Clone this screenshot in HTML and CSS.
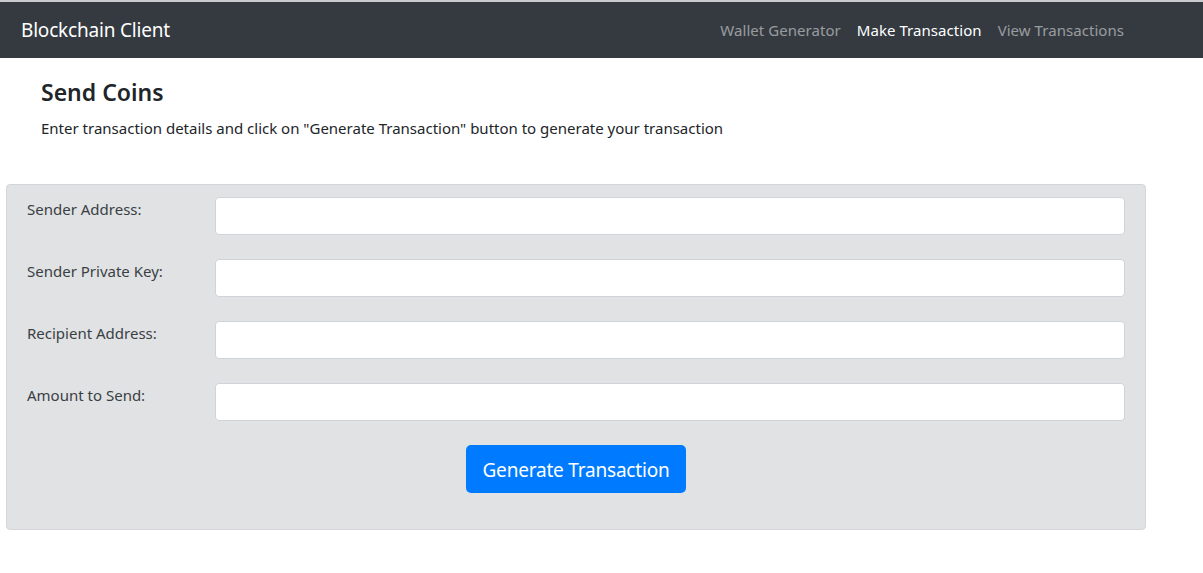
FILE: index.html
```html
<!DOCTYPE html>
<html>
<head>
<meta charset="utf-8">
<title>Blockchain Client</title>
<link rel="stylesheet" href="styles.css">
</head>
<body>
<nav class="navbar">
  <a class="brand" href="#">Blockchain Client</a>
  <ul class="nav">
    <li><a class="nav-link" href="#">Wallet Generator</a></li>
    <li><a class="nav-link active" href="#">Make Transaction</a></li>
    <li><a class="nav-link" href="#">View Transactions</a></li>
  </ul>
</nav>
<main class="intro">
  <h4 class="title">Send Coins</h4>
  <p class="lead-text">Enter transaction details and click on "Generate Transaction" button to generate your transaction</p>
</main>
<section class="card">
  <div class="form-row">
    <label class="form-label">Sender Address:</label>
    <input class="form-input" type="text">
  </div>
  <div class="form-row">
    <label class="form-label">Sender Private Key:</label>
    <input class="form-input" type="text">
  </div>
  <div class="form-row">
    <label class="form-label">Recipient Address:</label>
    <input class="form-input" type="text">
  </div>
  <div class="form-row">
    <label class="form-label">Amount to Send:</label>
    <input class="form-input" type="text">
  </div>
  <div class="actions">
    <button class="btn" type="button">Generate Transaction</button>
  </div>
</section>
</body>
</html>
```
FILE: styles.css
```css
* { box-sizing: border-box; }
html, body { margin: 0; padding: 0; background: #fff; }
body {
  font-family: "Noto Sans", "Open Sans", sans-serif;
  font-size: 15px;
  color: #212529;
  border-top: 2px solid #c8cacd;
}
.navbar {
  height: 56px;
  background: #343a40;
  display: flex;
  align-items: center;
  justify-content: space-between;
  padding: 0 79px 0 21px;
}
.brand {
  color: #fff;
  text-decoration: none;
  font-size: 19px;
  letter-spacing: -0.2px;
}
.nav {
  list-style: none;
  display: flex;
  margin: 0;
  padding: 0;
  gap: 16px;
}
.nav-link {
  color: rgba(255,255,255,0.5);
  text-decoration: none;
  font-size: 15px;
  letter-spacing: 0.05px;
}
.nav-link.active { color: #fff; }
.intro {
  padding: 19px 41px 0;
}
.title {
  margin: 0;
  font-size: 23px;
  font-weight: 600;
  line-height: 30px;
  letter-spacing: 0;
}
.lead-text {
  margin: 10px 0 0;
  font-size: 15px;
  line-height: 22px;
  letter-spacing: 0;
}
.card {
  margin: 45px 0 0 6px;
  width: 1140px;
  background: #e1e2e4;
  border: 1px solid #d3d5d8;
  border-radius: 4px;
  padding: 12px 20px 36px 20px;
  display: flex;
  flex-direction: column;
  gap: 24px;
}
.form-row {
  display: flex;
  align-items: flex-start;
}
.form-label {
  width: 188px;
  font-size: 15px;
  line-height: 22px;
  color: #3a3f44;
  padding-top: 1px;
  letter-spacing: 0;
}
.form-input {
  flex: 1;
  height: 38px;
  border: 1px solid #ced4da;
  border-radius: 4px;
  background: #fff;
}
.actions {
  display: flex;
  justify-content: center;
}
.btn {
  width: 220px;
  height: 48px;
  background: #007bff;
  color: #fff;
  border: 0;
  border-radius: 5px;
  font-family: "Noto Sans", "Open Sans", sans-serif;
  font-size: 19px;
  letter-spacing: -0.2px;
  padding-top: 2px;
}
```
